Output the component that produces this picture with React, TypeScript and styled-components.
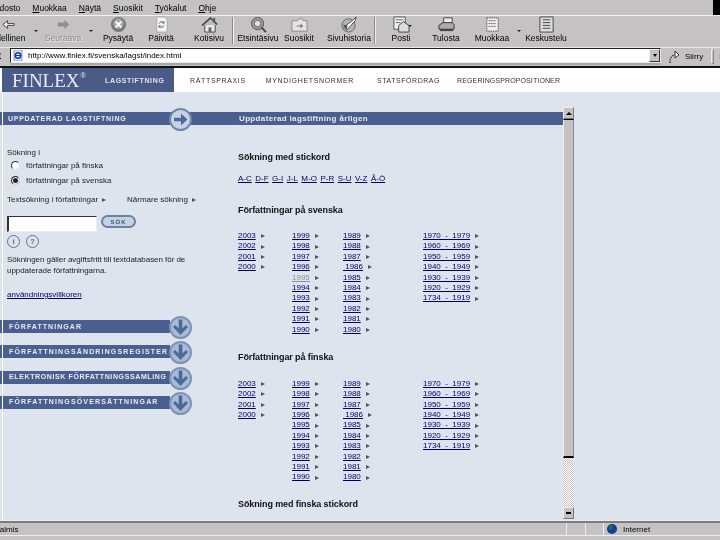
import React from "react";
import styled, { createGlobalStyle } from "styled-components";

const Global = createGlobalStyle`
  html, body { margin: 0; padding: 0; background: #c4c2c2; }
  * { box-sizing: border-box; }
`;

const Win = styled.div`
  position: relative; width: 720px; height: 540px; overflow: hidden;
  display: flex; flex-direction: column; background: #c4c2c2;
  font-family: "Liberation Sans", Arial, sans-serif; color: #000;
  filter: blur(0.4px);
`;

const MenuBar = styled.div`
  height: 16px; flex: none; display: flex; align-items: center; gap: 12px;
  margin-left: -12px; font-size: 8.5px; border-bottom: 1px solid #f2f2f2;
  position: relative;
`;
const MenuItem = styled.span`
  &::first-letter { text-decoration: underline; }
`;
const Throbber = styled.div`
  position: absolute; right: 0; top: 0; width: 7px; height: 15px; background: #000;
`;

const Toolbar = styled.div`
  height: 31px; flex: none; display: flex; margin-left: -30px;
`;
const Tool = styled.div<{ $w: number; $ml?: number; $off?: boolean }>`
  position: relative; width: ${p => p.$w}px; margin-left: ${p => p.$ml ?? 0}px; flex: none;
  display: flex; flex-direction: column; align-items: center;
  font-size: 8.5px; line-height: 10px; white-space: nowrap;
  color: ${p => (p.$off ? "#8b8b8b" : "#000")};
  text-shadow: ${p => (p.$off ? "1px 1px 0 #eee" : "none")};
  svg { width: 17px; height: 17px; flex: none; }
`;
const Caret = styled.i`
  position: absolute; width: 0; height: 0; border: 2.5px solid transparent; border-top-color: #222;
`;
const ToolCaret = styled(Caret)<{ $r: number; $t: number }>`
  right: ${p => p.$r}px; top: ${p => p.$t}px;
`;
const ToolSep = styled.div`
  width: 2px; height: 27px; margin: 1px 0 0; flex: none;
  border-left: 1px solid #8a8a8a; border-right: 1px solid #eee;
`;

const AddressBar = styled.div`
  height: 21px; flex: none; display: flex; align-items: flex-start; position: relative;
  border-top: 1px solid #e8e8e8; border-bottom: 2px solid #111; font-size: 9px;
`;
const AddrLabel = styled.span`
  width: 10px; flex: none; margin-top: 1px; margin-left: -4px; margin-right: 4px; text-decoration: underline;
`;
const AddrField = styled.div`
  width: 651px; height: 15px; flex: none; background: #fff; display: flex; align-items: center;
  border-top: 1px solid #222; border-left: 1px solid #222;
  border-bottom: 1px solid #e8e8e8; border-right: 1px solid #e8e8e8;
  box-shadow: 0 2px 0 #a8a8a8; position: relative; font-size: 8px; gap: 5px; padding-left: 2px;
  svg { width: 10px; height: 11px; }
`;
const DropBtn = styled.span`
  position: absolute; right: 0; top: 0; width: 11px; height: 13px; background: #c4c2c2;
  border: 1px solid; border-color: #eee #333 #333 #eee; display: flex; align-items: center; justify-content: center;
`;
const DropCaret = styled(Caret)`
  border-width: 3px 2.5px 0; border-style: solid; border-color: #000 transparent transparent;
`;
const Go = styled.div`
  display: flex; align-items: center; gap: 5px; margin-left: 7px; font-size: 8px; margin-top: 1px;
  svg { width: 12px; height: 14px; }
`;
const GoSep = styled.span`
  width: 3px; height: 15px; border: 1px solid; border-color: #eee #888 #888 #eee; margin-left: 3px;
`;

const Nav = styled.div`
  height: 24px; flex: none; background: #fff; display: flex; align-items: center; position: relative;
`;
const Tab = styled.div`
  width: 172px; height: 100%; background: #4a5b88; margin-left: 2px; flex: none;
  display: flex; align-items: center; color: #fff; padding-left: 10px;
`;
const Logo = styled.span`
  font-family: "Liberation Serif", serif; font-size: 19px; line-height: 19px; color: #e8edf3; letter-spacing: 0; width: 93px; flex: none;
  sup { font-family: "Liberation Sans", sans-serif; font-size: 7px; line-height: 0; vertical-align: 9px; margin-left: 1px; }
`;
const NavText = styled.span<{ $ml?: number; $active?: boolean; $ls?: number }>`
  position: relative; font-size: 7px; font-weight: ${p => (p.$active ? 700 : 400)};
  letter-spacing: ${p => p.$ls ?? 0.65}px; white-space: nowrap; margin-left: ${p => p.$ml ?? 0}px;
  color: ${p => (p.$active ? "#dde3ee" : "#333")};
  &::after {
    content: ""; position: absolute; left: 50%; bottom: -12px; margin-left: -3px; width: 0; height: 0;
    border: 3px solid transparent; border-bottom-width: 0; border-top-width: 4px;
    border-top-color: ${p => (p.$active ? "#4a5b88" : "#fff")};
  }
`;

const Body = styled.div`
  flex: 1; min-height: 0; background: #dde4ee; display: flex; position: relative;
  &::before {
    content: ""; position: absolute; left: 2px; top: 0; bottom: 0; width: 1px; background: #fff; z-index: 2;
  }
`;
const Content = styled.div`
  width: 563px; flex: none; padding-top: 20px; overflow: hidden; display: flex; flex-direction: column;
`;
const Band = styled.div`
  position: relative; height: 13px; flex: none; background: #4a5f8f; display: flex; align-items: center; color: #e6ebf3;
`;
const BandLeft = styled.span`
  width: 239px; padding-left: 8px; font-size: 7px; font-weight: 700; letter-spacing: 0.72px; flex: none;
`;
const BandRight = styled.span`
  font-size: 8px; font-weight: 700; letter-spacing: 0.35px;
`;
const Circle = styled.svg<{ $l: number }>`
  position: absolute; left: ${p => p.$l}px; top: -4px; width: 23px; height: 23px; z-index: 1;
`;
const Columns = styled.div`
  display: flex; flex: 1; min-height: 0;
`;
const LeftCol = styled.div`
  width: 238px; flex: none; font-size: 8px; line-height: 10px; color: #222;
  display: flex; flex-direction: column;
`;
const LeftInner = styled.div`
  padding: 23px 0 0 7px; display: flex; flex-direction: column;
`;
const RadioRow = styled.div<{ $mt: number }>`
  display: flex; align-items: center; gap: 6px; margin: ${p => p.$mt}px 0 0 4px; height: 11px;
`;
const Radio = styled.span<{ $on?: boolean }>`
  width: 9px; height: 9px; border-radius: 50%; background: ${p => (p.$on ? "#222" : "#fff")};
  border: 1px solid #333; border-right-color: #ddd; border-bottom-color: #ddd;
  box-shadow: ${p => (p.$on ? "inset 0 0 0 1px #fff" : "none")}; flex: none;
`;
const SearchLinks = styled.div`
  display: flex; margin-top: 8px; height: 11px; align-items: center;
`;
const Arrowed = styled.span<{ $w?: number }>`
  width: ${p => (p.$w ? p.$w + "px" : "auto")}; display: inline-flex; align-items: center; gap: 4px; white-space: nowrap;
`;
const Tri = styled.i`
  width: 0; height: 0; border-style: solid; border-width: 2.5px 0 2.5px 4px;
  border-color: transparent transparent transparent #555; flex: none;
`;
const SearchRow = styled.div`
  display: flex; align-items: flex-start; gap: 4px; margin-top: 11px;
`;
const Input = styled.div`
  width: 90px; height: 16px; background: #fff; border: 1px solid; border-color: #333 #eee #eee #333; border-width: 1px 1px 1px 2px;
`;
const SearchBtn = styled.span`
  width: 35px; height: 13px; border-radius: 7px; border: 2px solid #6b82a4; background: #c6d2e2; margin-top: -1px;
  display: flex; align-items: center; justify-content: center; font-size: 6px; font-weight: 700; letter-spacing: 1px; color: #3f5479;
`;
const HelpRow = styled.div`
  display: flex; gap: 6px; margin-top: 3px;
`;
const Help = styled.span`
  width: 13px; height: 13px; border-radius: 50%; border: 1px solid #5f7391; color: #5f7391;
  display: flex; align-items: center; justify-content: center; font-size: 8px; font-weight: 700; line-height: 1;
`;
const Para = styled.p`
  margin: 7px 0 0; width: 190px; line-height: 10.5px; letter-spacing: -0.05px;
`;
const NavyLink = styled.span<{ $grey?: boolean }>`
  color: ${p => (p.$grey ? "#8a8f99" : "#00005f")}; text-decoration: underline; white-space: pre;
`;
const TermsRow = styled.div`
  margin-top: 14px; height: 11px;
`;
const Bars = styled.div`
  margin-top: 19px; display: flex; flex-direction: column; gap: 12.3px;
`;
const Bar = styled.div`
  position: relative; width: 170px; height: 13px; background: #4a5f8f; display: flex; align-items: center;
`;
const BarText = styled.span<{ $ls: number }>`
  padding-left: 9px; color: #e6ebf3; font-size: 7px; font-weight: 700; white-space: nowrap;
  letter-spacing: ${p => p.$ls}px;
`;

const RightCol = styled.div`
  flex: 1; min-width: 0; font-size: 8px; display: flex; flex-direction: column; padding-top: 27px;
`;
const Heading = styled.div<{ $mt?: number }>`
  font-size: 9px; font-weight: 700; line-height: 11px; color: #111; letter-spacing: -0.1px;
  margin-top: ${p => p.$mt ?? 0}px; white-space: nowrap;
`;
const Alpha = styled.div`
  display: flex; gap: 3.5px; margin-top: 10px; line-height: 11px;
`;
const Lists = styled.div<{ $mt: number }>`
  display: grid; grid-template-columns: 54px 51px 80px auto; margin-top: ${p => p.$mt}px;
  justify-content: start;
`;
const ListCol = styled.div`
  display: flex; flex-direction: column;
`;
const YearRow = styled.div`
  height: 10.4px; line-height: 10.4px; display: flex; align-items: center; gap: 5px;
`;

const Scroll = styled.div`
  width: 11px; flex: none; margin-top: 15px; margin-bottom: 1px; display: flex; flex-direction: column;
  background-color: #c4c2c2;
  background-image: conic-gradient(#fff 25%, #c4c2c2 0 50%, #fff 0 75%, #c4c2c2 0);
  background-size: 2px 2px;
`;
const ScrollBtn = styled.div`
  height: 12px; flex: none; background: #c4c2c2; display: flex; align-items: center; justify-content: center;
  border: 1px solid; border-color: #eee #777 #777 #eee;
`;
const TriUp = styled.i`
  width: 0; height: 0; border-style: solid; border-width: 0 3px 3px; border-color: transparent transparent #000;
`;
const Thumb = styled.div`
  height: 339px; flex: none; background: #c4c2c2; border: 1px solid; border-color: #eee #888 #000 #eee; border-bottom-width: 2px; border-top: 1px solid #000;
`;
const Track = styled.div`
  flex: 1;
`;
const TriDown = styled.i`
  width: 5px; height: 2px; background: #000;
`;

const Status = styled.div`
  height: 20px; flex: none; border-top: 1px solid #eee; display: flex; font-size: 8px; flex-direction: column;
`;
const StatusInner = styled.div`
  height: 15px; border-top: 2px solid #7d7d7d; border-bottom: 1px solid #eee; display: flex; align-items: center;
`;
const StatusText = styled.span`
  width: 566px; flex: none; margin-left: -5px; margin-right: 5px; white-space: nowrap;
`;
const StatusCell = styled.span<{ $w: number }>`
  width: ${p => p.$w}px; flex: none; height: 100%; border-left: 1px solid #eee; display: flex; align-items: center; gap: 6px; padding-left: 3px;
  svg { width: 10px; height: 10px; }
`;

const RightArrow = () => (
  <Circle $l={169} viewBox="0 0 23 23">
    <circle cx="11.5" cy="11.5" r="10.5" fill="#c8d4e4" stroke="#6f88ad" strokeWidth="2" />
    <path d="M5 9.7h7V5.5l6.5 6-6.5 6v-4.2H5z" fill="#4a6a9c" />
  </Circle>
);
const DownArrow = () => (
  <Circle $l={169} viewBox="0 0 23 23">
    <circle cx="11.5" cy="11.5" r="10.5" fill="#a9bad3" stroke="#7c93b5" strokeWidth="2" />
    <path d="M9.7 3.5h3.6v9l3.7-3.5 2 2-7.5 8-7.500-8 2-2 3.700 3.500z" fill="#4a6a9c" />
  </Circle>
);

const icons = {
  back: <svg viewBox="0 0 18 18"><path d="M3 9l5-4v3h7v2H8v3z" fill="#eee" stroke="#444" strokeWidth="1" /></svg>,
  forward: <svg viewBox="0 0 18 18"><path d="M15 9l-5-5v3H3v4h7v3z" fill="#8f8f8f" /></svg>,
  stop: <svg viewBox="0 0 18 18"><circle cx="9" cy="9" r="8" fill="#777" /><circle cx="9" cy="8" r="5.500" fill="#a9a9a9" /><path d="M6 6l6 6M12 6l-6 6" stroke="#fff" strokeWidth="2" /></svg>,
  refresh: <svg viewBox="0 0 18 18"><path d="M4 1h8l3 3v13H4z" fill="#f2f2f2" stroke="#aaa" /><path d="M11.500 7a3 3 0 0 0-5 1M6.500 11a3 3 0 0 0 5-1" stroke="#555" fill="none" /><path d="M12 5v3h-2.500zM6 13v-3h2.500z" fill="#555" /></svg>,
  home: <svg viewBox="0 0 18 18"><path d="M4 9v8h11V9" fill="#e9e9e9" stroke="#444" /><path d="M1 10l9-8 7 7" fill="#bbb" stroke="#333" strokeWidth="1.400" /><path d="M13 2h2v5h-2z" fill="#555" /><path d="M8 12h3v5H8z" fill="#666" /></svg>,
  search: <svg viewBox="0 0 18 18"><circle cx="8" cy="8" r="6.500" fill="#9a9a9a" stroke="#555" /><circle cx="8" cy="8" r="3.500" fill="#e0e0e0" stroke="#666" /><path d="M12 12l5 5" stroke="#444" strokeWidth="2" /></svg>,
  fav: <svg viewBox="0 0 18 18"><path d="M1 5h6l1-2h4l1 2h4v11H1z" fill="#e4e4e4" stroke="#888" /><path d="M6 10h4V8l3 2.500-3 2.500v-2H6z" fill="#777" /></svg>,
  history: <svg viewBox="0 0 18 18"><circle cx="8" cy="10" r="7" fill="#b5b5b5" stroke="#666" /><path d="M3 12l10-8 3-3-1 4-9 10z" fill="#fff" stroke="#444" /><path d="M2 9l5 1-1 5z" fill="#555" /></svg>,
  mail: <svg viewBox="0 0 18 18"><path d="M1 1h12v13H1z" fill="#f0f0f0" stroke="#555" /><path d="M3 4h8M3 7h5" stroke="#666" /><path d="M6 10l5-4 6 4v7H6z" fill="#ddd" stroke="#444" /></svg>,
  print: <svg viewBox="0 0 18 18"><path d="M6 2h9v6H6z" fill="#eee" stroke="#444" /><path d="M1 10l4-3h10l2 2v5H1z" fill="#aaa" stroke="#333" /><path d="M2 14h14v2H2z" fill="#444" /></svg>,
  edit: <svg viewBox="0 0 18 18"><path d="M3 2h12v14H3z" fill="#eee" stroke="#444" strokeDasharray="1.500 1" /><path d="M5 5h8M5 8h8M5 11h8" stroke="#222" strokeDasharray="1 1" /></svg>,
  discuss: <svg viewBox="0 0 18 18"><path d="M2 1h14v16H2z" fill="#dcdcdc" stroke="#444" /><path d="M5 4h8M5 7h8M5 10h8M5 13h8" stroke="#444" /></svg>,
};

const IEPage = () => (
  <svg viewBox="0 0 10 11"><path d="M1 0h8v11H1z" fill="#dfe6f5" stroke="#445" strokeWidth=".5" /><circle cx="5" cy="5.500" r="2.800" fill="none" stroke="#1238b0" strokeWidth="1.500" /><path d="M2 5.500h6" stroke="#1238b0" /></svg>
);
const GoArrow = () => (
  <svg viewBox="0 0 12 14"><path d="M2 13C2 7 4 5 8 5" fill="none" stroke="#333" strokeDasharray="1.500 1" strokeWidth="1.400" /><path d="M7 1l4 4-4 3z" fill="#fff" stroke="#333" /></svg>
);
const Globe = () => (
  <svg viewBox="0 0 10 10"><circle cx="5" cy="5" r="5" fill="#123a9c" /><path d="M2 2l3-1 1 3-2 2-2-1zM7 6l2-1-1 3z" fill="#1c7a3a" /></svg>
);

const col1 = ["2003", "2002", "2001", "2000"];
const col2 = ["1999", "1998", "1997", "1996", "1995", "1994", "1993", "1992", "1991", "1990"];
const col3 = ["1989", "1988", "1987", " 1986", "1985", "1984", "1983", "1982", "1981", "1980"];
const col4 = ["1970  -  1979", "1960  -  1969", "1950  -  1959", "1940  -  1949", "1930  -  1939", "1920  -  1929", "1734  -  1919"];

const YearColumn = ({ items, grey }: { items: string[]; grey?: string }) => (
  <ListCol>
    {items.map(y => (
      <YearRow key={y}>
        <NavyLink $grey={y === grey}>{y}</NavyLink>
        <Tri />
      </YearRow>
    ))}
  </ListCol>
);

const YearLists = ({ grey, mt }: { grey?: string; mt: number }) => (
  <Lists $mt={mt}>
    <YearColumn items={col1} />
    <YearColumn items={col2} grey={grey} />
    <YearColumn items={col3} />
    <YearColumn items={col4} />
  </Lists>
);

export default function App() {
  return (
    <Win>
      <Global />
      <MenuBar>
        {["Tiedosto", "Muokkaa", "Näytä", "Suosikit", "Työkalut", "Ohje"].map(m => (
          <MenuItem key={m}>{m}</MenuItem>
        ))}
        <Throbber />
      </MenuBar>
      <Toolbar>
        <Tool $w={76}>{icons.back}Edellinen<ToolCaret $r={8} $t={14} /></Tool>
        <Tool $w={34} $off>{icons.forward}Seuraava<ToolCaret $r={-13} $t={14} /></Tool>
        <Tool $w={36} $ml={20}>{icons.stop}Pysäytä</Tool>
        <Tool $w={50}>{icons.refresh}Päivitä</Tool>
        <Tool $w={46}>{icons.home}Kotisivu</Tool>
        <ToolSep />
        <Tool $w={48}>{icons.search}Etsintäsivu</Tool>
        <Tool $w={34}>{icons.fav}Suosikit</Tool>
        <Tool $w={50} $ml={8}>{icons.history}Sivuhistoria</Tool>
        <ToolSep />
        <Tool $w={50}>{icons.mail}Posti<ToolCaret $r={14} $t={9} /></Tool>
        <Tool $w={40}>{icons.print}Tulosta</Tool>
        <Tool $w={52}>{icons.edit}Muokkaa<ToolCaret $r={-3} $t={14} /></Tool>
        <Tool $w={56}>{icons.discuss}Keskustelu</Tool>
      </Toolbar>
      <AddressBar>
        <AddrLabel>e</AddrLabel>
        <AddrField>
          <IEPage />
          http://www.finlex.fi/svenska/lagst/index.html
          <DropBtn><DropCaret /></DropBtn>
        </AddrField>
        <Go><GoArrow />Siirry<GoSep />Li</Go>
      </AddressBar>
      <Nav>
        <Tab>
          <Logo>FINLEX<sup>®</sup></Logo>
          <NavText $active>LAGSTIFTNING</NavText>
        </Tab>
        <NavText $ml={16}>RÄTTSPRAXIS</NavText>
        <NavText $ml={20}>MYNDIGHETSNORMER</NavText>
        <NavText $ml={23} $ls={0.55}>STATSFÖRDRAG</NavText>
        <NavText $ml={17} $ls={0.12}>REGERINGSPROPOSITIONER</NavText>
      </Nav>
      <Body>
        <Content>
          <Band>
            <BandLeft>UPPDATERAD LAGSTIFTNING</BandLeft>
            <BandRight>Uppdaterad lagstiftning årligen</BandRight>
            <RightArrow />
          </Band>
          <Columns>
            <LeftCol>
              <LeftInner>
                <div>Sökning i</div>
                <RadioRow $mt={2}><Radio />författningar på finska</RadioRow>
                <RadioRow $mt={4}><Radio $on />författningar på svenska</RadioRow>
                <SearchLinks>
                  <Arrowed $w={120}>Textsökning i författningar <Tri /></Arrowed>
                  <Arrowed>Närmare sökning <Tri /></Arrowed>
                </SearchLinks>
                <SearchRow>
                  <Input />
                  <SearchBtn>SÖK</SearchBtn>
                </SearchRow>
                <HelpRow>
                  <Help>i</Help>
                  <Help>?</Help>
                </HelpRow>
                <Para>Sökningen gäller avgiftsfritt till textdatabasen för de uppdaterade författningarna.</Para>
                <TermsRow><NavyLink>användningsvillkoren</NavyLink></TermsRow>
              </LeftInner>
              <Bars>
                <Bar><BarText $ls={1.05}>FÖRFATTNINGAR</BarText><DownArrow /></Bar>
                <Bar><BarText $ls={1.15}>FÖRFATTNINGSÄNDRINGSREGISTER</BarText><DownArrow /></Bar>
                <Bar><BarText $ls={0.62}>ELEKTRONISK FÖRFATTNINGSSAMLING</BarText><DownArrow /></Bar>
                <Bar><BarText $ls={1.15}>FÖRFATTNINGSÖVERSÄTTNINGAR</BarText><DownArrow /></Bar>
              </Bars>
            </LeftCol>
            <RightCol>
              <Heading>Sökning med stickord</Heading>
              <Alpha>
                {["A-C", "D-F", "G-I", "J-L", "M-O", "P-R", "S-U", "V-Z", "Å-Ö"].map(a => (
                  <NavyLink key={a}>{a}</NavyLink>
                ))}
              </Alpha>
              <Heading $mt={21}>Författningar på svenska</Heading>
              <YearLists grey="1995" mt={15} />
              <Heading $mt={17}>Författningar på finska</Heading>
              <YearLists mt={16} />
              <Heading $mt={16}>Sökning med finska stickord</Heading>
            </RightCol>
          </Columns>
        </Content>
        <Scroll>
          <ScrollBtn><TriUp /></ScrollBtn>
          <Thumb />
          <Track />
          <ScrollBtn><TriDown /></ScrollBtn>
        </Scroll>
      </Body>
      <Status>
        <StatusInner>
          <StatusText>Valmis</StatusText>
          <StatusCell $w={19} />
          <StatusCell $w={18} />
          <StatusCell $w={100}><Globe />Internet</StatusCell>
        </StatusInner>
      </Status>
    </Win>
  );
}
